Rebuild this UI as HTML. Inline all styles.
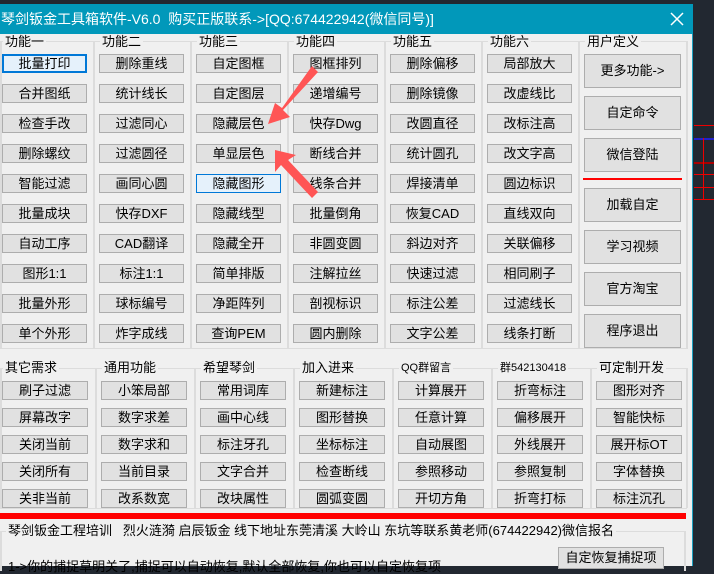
<!DOCTYPE html>
<html><head><meta charset="utf-8"><style>
*{margin:0;padding:0;box-sizing:border-box}
body{width:714px;height:566px;overflow:hidden;background:#222831;position:relative;font-family:"Liberation Sans","Noto Sans CJK SC",sans-serif;font-size:13px;color:#000}
.win{position:absolute;left:0;top:4px;width:693px;height:562px;background:#f0f0f0;border-right:1px solid #1ba0c0}
.title{position:absolute;left:0;top:4px;width:693px;height:30px;background:#0198ba;color:#fff;font-size:14px;line-height:30px;padding-left:1px;white-space:nowrap;font-weight:normal}
.b{position:absolute;height:19px;background:#e1e1e1;border:1px solid #adadad;text-align:center;line-height:17px;font-size:13px;white-space:nowrap}
.t{width:85px}.s{width:86px}
.u{position:absolute;left:584px;width:97px;height:34px;background:#e1e1e1;border:1px solid #adadad;text-align:center;line-height:32px;font-size:13px}
.lab{position:absolute;font-size:13px;line-height:14px;background:#f0f0f0;padding:0 2px;white-space:nowrap}
.vl{position:absolute;width:2px;background:#dcdcdc}
.hl{position:absolute;height:1px;background:#dcdcdc}
</style></head><body>
<div class="win"></div>
<div class="title">琴剑钣金工具箱软件-V6.0&nbsp; 购买正版联系->[QQ:674422942(微信同号)]</div>
<svg style="position:absolute;left:670px;top:12px" width="14" height="14"><path d="M1 1L13 13M13 1L1 13" stroke="#fff" stroke-width="1.5"/></svg>
<div class="hl" style="left:0;top:41px;width:687px"></div>
<div class="vl" style="left:0;top:41px;height:308px"></div>
<div class="vl" style="left:93px;top:41px;height:308px"></div>
<div class="vl" style="left:190px;top:41px;height:308px"></div>
<div class="vl" style="left:287px;top:41px;height:308px"></div>
<div class="vl" style="left:384px;top:41px;height:308px"></div>
<div class="vl" style="left:481px;top:41px;height:308px"></div>
<div class="vl" style="left:578px;top:41px;height:308px"></div>
<div class="vl" style="left:686px;top:41px;height:308px"></div>
<div class="hl" style="left:0;top:348px;width:687px"></div>
<div class="lab" style="left:3px;top:35px">功能一</div>
<div class="lab" style="left:100px;top:35px">功能二</div>
<div class="lab" style="left:197px;top:35px">功能三</div>
<div class="lab" style="left:294px;top:35px">功能四</div>
<div class="lab" style="left:391px;top:35px">功能五</div>
<div class="lab" style="left:488px;top:35px">功能六</div>
<div class="lab" style="left:585px;top:35px">用户定义</div>
<div class="b t" style="left:2px;top:54px;border:2px solid #0078d7;background:#e5f1fb;line-height:15px">批量打印</div>
<div class="b t" style="left:2px;top:84px">合并图纸</div>
<div class="b t" style="left:2px;top:114px">检查手改</div>
<div class="b t" style="left:2px;top:144px">删除螺纹</div>
<div class="b t" style="left:2px;top:174px">智能过滤</div>
<div class="b t" style="left:2px;top:204px">批量成块</div>
<div class="b t" style="left:2px;top:234px">自动工序</div>
<div class="b t" style="left:2px;top:264px">图形1:1</div>
<div class="b t" style="left:2px;top:294px">批量外形</div>
<div class="b t" style="left:2px;top:324px">单个外形</div>
<div class="b t" style="left:99px;top:54px">删除重线</div>
<div class="b t" style="left:99px;top:84px">统计线长</div>
<div class="b t" style="left:99px;top:114px">过滤同心</div>
<div class="b t" style="left:99px;top:144px">过滤圆径</div>
<div class="b t" style="left:99px;top:174px">画同心圆</div>
<div class="b t" style="left:99px;top:204px">快存DXF</div>
<div class="b t" style="left:99px;top:234px">CAD翻译</div>
<div class="b t" style="left:99px;top:264px">标注1:1</div>
<div class="b t" style="left:99px;top:294px">球标编号</div>
<div class="b t" style="left:99px;top:324px">炸字成线</div>
<div class="b t" style="left:196px;top:54px">自定图框</div>
<div class="b t" style="left:196px;top:84px">自定图层</div>
<div class="b t" style="left:196px;top:114px">隐藏层色</div>
<div class="b t" style="left:196px;top:144px">单显层色</div>
<div class="b t" style="left:196px;top:174px;border-color:#0078d7;background:#e5f1fb">隐藏图形</div>
<div class="b t" style="left:196px;top:204px">隐藏线型</div>
<div class="b t" style="left:196px;top:234px">隐藏全开</div>
<div class="b t" style="left:196px;top:264px">简单排版</div>
<div class="b t" style="left:196px;top:294px">净距阵列</div>
<div class="b t" style="left:196px;top:324px">查询PEM</div>
<div class="b t" style="left:293px;top:54px">图框排列</div>
<div class="b t" style="left:293px;top:84px">递增编号</div>
<div class="b t" style="left:293px;top:114px">快存Dwg</div>
<div class="b t" style="left:293px;top:144px">断线合并</div>
<div class="b t" style="left:293px;top:174px">线条合并</div>
<div class="b t" style="left:293px;top:204px">批量倒角</div>
<div class="b t" style="left:293px;top:234px">非圆变圆</div>
<div class="b t" style="left:293px;top:264px">注解拉丝</div>
<div class="b t" style="left:293px;top:294px">剖视标识</div>
<div class="b t" style="left:293px;top:324px">圆内删除</div>
<div class="b t" style="left:390px;top:54px">删除偏移</div>
<div class="b t" style="left:390px;top:84px">删除镜像</div>
<div class="b t" style="left:390px;top:114px">改圆直径</div>
<div class="b t" style="left:390px;top:144px">统计圆孔</div>
<div class="b t" style="left:390px;top:174px">焊接清单</div>
<div class="b t" style="left:390px;top:204px">恢复CAD</div>
<div class="b t" style="left:390px;top:234px">斜边对齐</div>
<div class="b t" style="left:390px;top:264px">快速过滤</div>
<div class="b t" style="left:390px;top:294px">标注公差</div>
<div class="b t" style="left:390px;top:324px">文字公差</div>
<div class="b t" style="left:487px;top:54px">局部放大</div>
<div class="b t" style="left:487px;top:84px">改虚线比</div>
<div class="b t" style="left:487px;top:114px">改标注高</div>
<div class="b t" style="left:487px;top:144px">改文字高</div>
<div class="b t" style="left:487px;top:174px">圆边标识</div>
<div class="b t" style="left:487px;top:204px">直线双向</div>
<div class="b t" style="left:487px;top:234px">关联偏移</div>
<div class="b t" style="left:487px;top:264px">相同刷子</div>
<div class="b t" style="left:487px;top:294px">过滤线长</div>
<div class="b t" style="left:487px;top:324px">线条打断</div>
<div class="u" style="top:54px">更多功能-></div>
<div class="u" style="top:96px">自定命令</div>
<div class="u" style="top:138px">微信登陆</div>
<div style="position:absolute;left:583px;top:178px;width:99px;height:2px;background:#f00"></div>
<div class="u" style="top:188px">加载自定</div>
<div class="u" style="top:230px">学习视频</div>
<div class="u" style="top:272px">官方淘宝</div>
<div class="u" style="top:314px">程序退出</div>
<div class="hl" style="left:0;top:368px;width:687px"></div>
<div class="vl" style="left:0;top:368px;height:140px"></div>
<div class="vl" style="left:95px;top:368px;height:140px"></div>
<div class="vl" style="left:194px;top:368px;height:140px"></div>
<div class="vl" style="left:293px;top:368px;height:140px"></div>
<div class="vl" style="left:392px;top:368px;height:140px"></div>
<div class="vl" style="left:491px;top:368px;height:140px"></div>
<div class="vl" style="left:590px;top:368px;height:140px"></div>
<div class="vl" style="left:686px;top:368px;height:140px"></div>
<div class="hl" style="left:0;top:508px;width:687px"></div>
<div class="lab" style="left:3px;top:361px">其它需求</div>
<div class="lab" style="left:102px;top:361px">通用功能</div>
<div class="lab" style="left:201px;top:361px">希望琴剑</div>
<div class="lab" style="left:300px;top:361px">加入进来</div>
<div class="lab" style="left:399px;top:361px;font-size:11px">QQ群留言</div>
<div class="lab" style="left:498px;top:361px;font-size:11px">群542130418</div>
<div class="lab" style="left:597px;top:361px">可定制开发</div>
<div class="b s" style="left:2px;top:381px">刷子过滤</div>
<div class="b s" style="left:2px;top:408px">屏幕改字</div>
<div class="b s" style="left:2px;top:435px">关闭当前</div>
<div class="b s" style="left:2px;top:462px">关闭所有</div>
<div class="b s" style="left:2px;top:489px">关非当前</div>
<div class="b s" style="left:101px;top:381px">小笨局部</div>
<div class="b s" style="left:101px;top:408px">数字求差</div>
<div class="b s" style="left:101px;top:435px">数字求和</div>
<div class="b s" style="left:101px;top:462px">当前目录</div>
<div class="b s" style="left:101px;top:489px">改系数宽</div>
<div class="b s" style="left:200px;top:381px">常用词库</div>
<div class="b s" style="left:200px;top:408px">画中心线</div>
<div class="b s" style="left:200px;top:435px">标注牙孔</div>
<div class="b s" style="left:200px;top:462px">文字合并</div>
<div class="b s" style="left:200px;top:489px">改块属性</div>
<div class="b s" style="left:299px;top:381px">新建标注</div>
<div class="b s" style="left:299px;top:408px">图形替换</div>
<div class="b s" style="left:299px;top:435px">坐标标注</div>
<div class="b s" style="left:299px;top:462px">检查断线</div>
<div class="b s" style="left:299px;top:489px">圆弧变圆</div>
<div class="b s" style="left:398px;top:381px">计算展开</div>
<div class="b s" style="left:398px;top:408px">任意计算</div>
<div class="b s" style="left:398px;top:435px">自动展图</div>
<div class="b s" style="left:398px;top:462px">参照移动</div>
<div class="b s" style="left:398px;top:489px">开切方角</div>
<div class="b s" style="left:497px;top:381px">折弯标注</div>
<div class="b s" style="left:497px;top:408px">偏移展开</div>
<div class="b s" style="left:497px;top:435px">外线展开</div>
<div class="b s" style="left:497px;top:462px">参照复制</div>
<div class="b s" style="left:497px;top:489px">折弯打标</div>
<div class="b s" style="left:596px;top:381px">图形对齐</div>
<div class="b s" style="left:596px;top:408px">智能快标</div>
<div class="b s" style="left:596px;top:435px">展开标OT</div>
<div class="b s" style="left:596px;top:462px">字体替换</div>
<div class="b s" style="left:596px;top:489px">标注沉孔</div>
<div style="position:absolute;left:0;top:513px;width:686px;height:6px;background:#f00"></div>
<div class="hl" style="left:0;top:531px;width:686px"></div>
<div class="vl" style="left:0;top:531px;height:40px"></div>
<div class="vl" style="left:684px;top:531px;height:40px"></div>
<div class="lab" style="left:6px;top:524px">琴剑钣金工程培训&nbsp;&nbsp; 烈火涟漪 启辰钣金 线下地址东莞清溪 大岭山 东坑等联系黄老师(674422942)微信报名</div>
<div style="position:absolute;left:8px;top:559px;font-size:13px;line-height:15px;white-space:nowrap">1->你的捕捉草明关了,捕捉可以自动恢复,默认全部恢复,你也可以自定恢复项</div>
<div class="b" style="left:558px;top:547px;width:106px;height:22px;line-height:20px">自定恢复捕捉项</div>
<div style="position:absolute;left:694px;top:125px;width:20px;height:1px;background:#e00"></div>
<div style="position:absolute;left:694px;top:138px;width:20px;height:2px;background:#22c"></div>
<div style="position:absolute;left:694px;top:162px;width:20px;height:2px;background:#a00"></div>
<div style="position:absolute;left:694px;top:174px;width:20px;height:1px;background:#e00"></div>
<div style="position:absolute;left:694px;top:187px;width:20px;height:1px;background:#e00"></div>
<div style="position:absolute;left:694px;top:199px;width:20px;height:1px;background:#e00"></div>
<div style="position:absolute;left:703px;top:138px;width:1px;height:62px;background:#e00"></div>
<svg style="position:absolute;left:0;top:0" width="714" height="566">
<g fill="#f55" stroke="none">
<polygon points="312,66 318,72 283,110 290,117 268,124 275,103 282,108"/>
<polygon points="318,192 312,198 281,165 275,172 275,150 296,155 288,160"/>
</g>
</svg>
</body></html>
